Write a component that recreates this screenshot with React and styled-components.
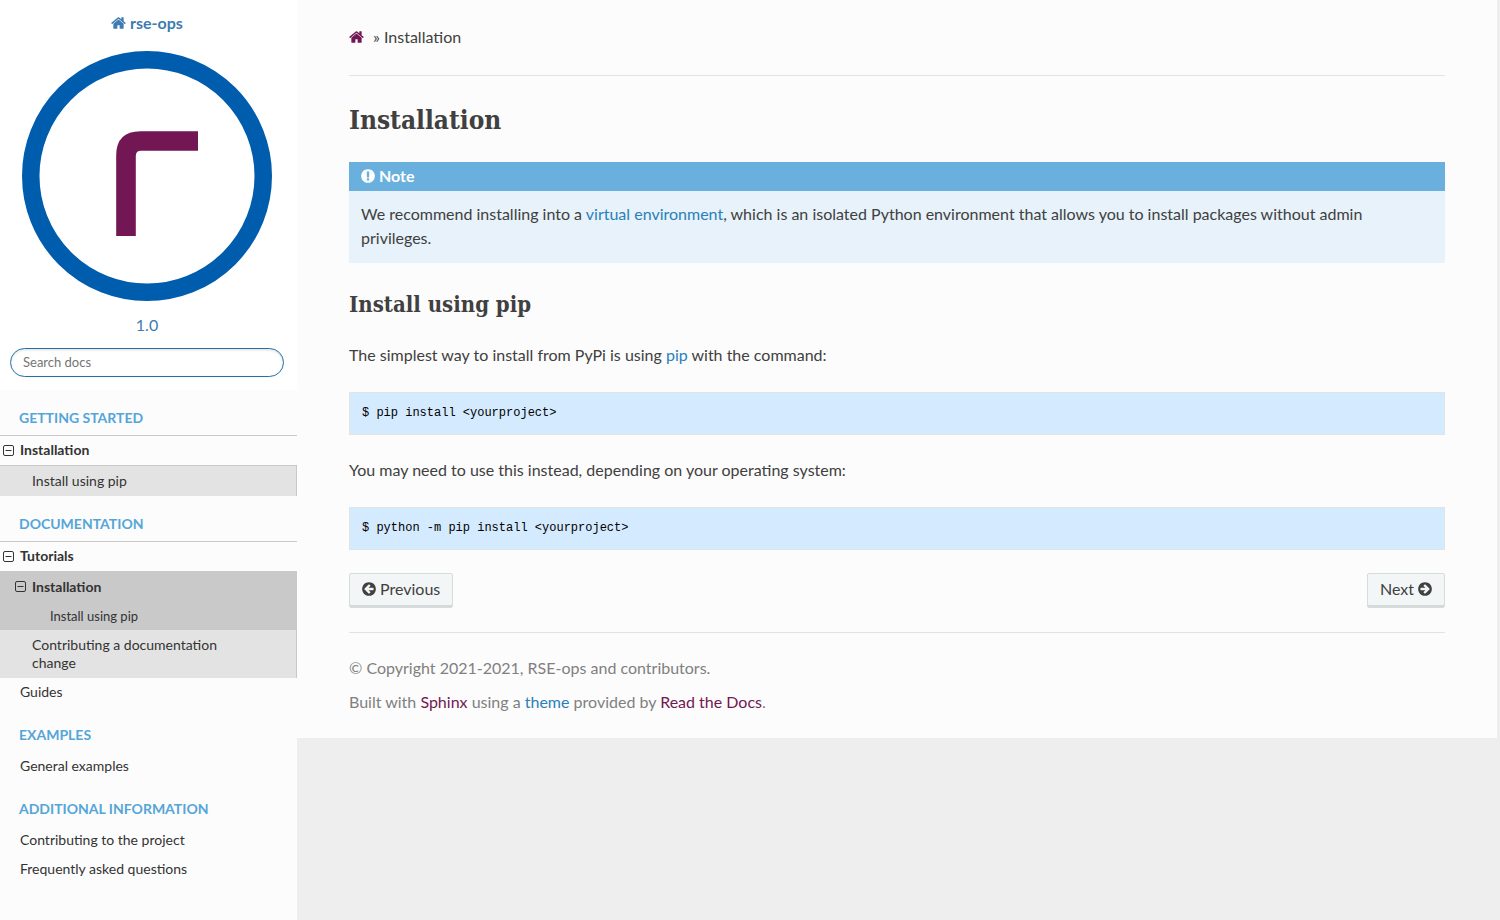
import React from "react";
import styled, { createGlobalStyle, css } from "styled-components";

const GlobalStyle = createGlobalStyle`
  *, *::before, *::after { box-sizing: border-box; }
  html { background: #eeeeee; }
  body {
    margin: 0;
    font-family: Lato, "Liberation Sans", sans-serif;
    font-size: 16px;
    line-height: 24px;
    color: #404040;
  }
  p, h1, h2, ul, figure, pre { margin: 0; padding: 0; }
  ul { list-style: none; }
  a { color: #2980b9; text-decoration: none; }
`;

const Page = styled.div`
  display: flex;
  min-height: 100vh;
  align-items: flex-start;
`;

const Sidebar = styled.nav`
  flex: 0 0 297px;
  align-self: stretch;
  min-height: 100vh;
  background: #fcfcfc;
`;

const SidebarHeader = styled.div`
  display: flex;
  flex-direction: column;
  align-items: center;
  padding: 11px 13px 13px 10px;
  background: #ffffff;
  color: #3d7bb0;
`;

const ProjectLink = styled.a`
  display: flex;
  flex-direction: column;
  align-items: center;
  gap: 16px;
  font-weight: 700;
  color: inherit;
`;

const ProjectLogo = styled.svg`
  display: block;
  width: 250px;
  height: 250px;
`;

const Version = styled.div`
  margin: 12px 0 11px;
`;

const SearchForm = styled.form`
  width: 100%;
`;

const SearchInput = styled.input`
  display: block;
  width: 100%;
  height: 29px;
  padding: 5px 12px 7px;
  border: 1px solid #2472a4;
  border-radius: 50px;
  background: #ffffff;
  box-shadow: inset 0 1px 3px #dddddd;
  font-family: inherit;
  font-size: 13px;
  color: #404040;
  outline: none;
  &::placeholder { color: #757575; }
`;

const Caption = styled.p`
  margin: 12px 0 1px;
  padding: 0 19px;
  font-size: 14px;
  font-weight: 700;
  line-height: 32px;
  color: #55a5d9;
  text-transform: uppercase;
`;

const levels = {
  1: css`padding: 5px 20px 6px; font-size: 14px;`,
  2: css`
    padding: 6px 52px 6px 32px;
    font-size: 14px;
    background: #e3e3e3;
    border-right: 1px solid #c9c9c9;
  `,
  3: css`
    padding: 5px 50px;
    font-size: 13px;
    background: #c9c9c9;
  `,
};

const TocLink = styled.a`
  display: block;
  position: relative;
  line-height: 18px;
  color: #333333;
  ${(p) => levels[p.$level]}
  ${(p) => p.$rule && css`border-top: 1px solid #c9c9c9;`}
  ${(p) => p.$current && css`font-weight: 700;`}
  ${(p) => p.$open && css`background: #c9c9c9; border-top: 1px solid #c9c9c9;`}
`;

const Toggle = styled.svg`
  position: absolute;
  left: ${(p) => (p.$level === 1 ? 3 : 15)}px;
  top: 9px;
  width: 11px;
  height: 11px;
`;

const Main = styled.main`
  flex: 1 1 0;
  min-width: 0;
  max-width: 1200px;
  padding: 25px 52px 24px;
  background: #fcfcfc;
`;

const Breadcrumbs = styled.ul`
  display: flex;
  align-items: center;
  gap: 9px;
  margin-bottom: 26px;
`;

const HomeLink = styled.a`
  display: flex;
  color: #721753;
`;

const Rule = styled.hr`
  margin: 0;
  border: 0;
  border-top: 1px solid #e1e4e5;
`;

const Title = styled.h1`
  margin: 25px 0 23px;
  font-family: "Roboto Slab", "DejaVu Serif Condensed", "DejaVu Serif", serif;
  font-size: 26px;
  line-height: 38px;
`;

const Subtitle = styled.h2`
  margin: 25px 0 22px;
  font-family: "Roboto Slab", "DejaVu Serif Condensed", "DejaVu Serif", serif;
  font-size: 22px;
  line-height: 33px;
`;

const Note = styled.aside`
  background: #e7f2fa;
`;

const NoteTitle = styled.p`
  display: flex;
  align-items: center;
  gap: 4px;
  padding: 5px 12px 7px;
  font-weight: 700;
  line-height: 17px;
  color: #ffffff;
  background: #6ab0de;
`;

const NoteText = styled.p`
  padding: 11px 12px 13px;
`;

const CodeBlock = styled.pre`
  margin: 25px 0 23px;
  padding: 12px;
  border: 1px solid #e1e4e5;
  background: #d4eaff;
  color: #000000;
  font-family: "Liberation Mono", monospace;
  font-size: 12px;
  line-height: 17px;
  overflow-x: auto;
`;

const Pager = styled.div`
  display: flex;
  justify-content: space-between;
  margin-bottom: 24px;
`;

const PagerLink = styled.a`
  display: flex;
  align-items: center;
  gap: 4px;
  padding: 4px 12px 7px;
  border: 1px solid #d8dcdc;
  border-radius: 2px;
  background: #f3f6f6;
  box-shadow: inset 0 -2px 0 #d5dadb;
  color: #404040;
  line-height: 22px;
`;

const Footer = styled.footer`
  display: flex;
  flex-direction: column;
  gap: 10px;
  padding-top: 23px;
  color: #808080;
`;

const VisitedLink = styled.a`
  color: #721753;
`;

const Icon = styled.svg`
  display: ${(p) => (p.$inline ? "inline-block" : "block")};
  width: ${(p) => p.$width}px;
  height: 16px;
  fill: currentColor;
  vertical-align: -2px;
`;

const HomeIcon = ({ inline }) => (
  <Icon $width={15} $inline={inline} viewBox="0 0 1664 1792" aria-hidden="true">
    <path d="M1408 992v480q0 26-19 45t-45 19h-384v-384h-256v384h-384q-26 0-45-19t-19-45v-480q0-1 .5-3t.5-3l575-474 575 474q1 2 1 6zm223-69l-62 74q-8 9-21 11h-3q-13 0-21-7l-692-577-692 577q-12 8-24 7-13-2-21-11l-62-74q-8-10-7-23.500t11-21.500l719-599q32-26 76-26t76 26l244 204v-195q0-14 9-23t23-9h192q14 0 23 9t9 23v408l219 182q10 8 11 21.500t-7 23.500z" />
  </Icon>
);

const AlertIcon = () => (
  <Icon $width={14} viewBox="0 0 1536 1792" aria-hidden="true">
    <path d="M768 128q209 0 385.500 103t279.500 279.500 103 385.500-103 385.500-279.500 279.500-385.500 103-385.500-103-279.500-279.500-103-385.500 103-385.500 279.500-279.500 385.500-103zm128 1247v-190q0-14-9-23.500t-22-9.500h-192q-13 0-23 10t-10 23v190q0 13 10 23t23 10h192q13 0 22-9.500t9-23.500zm-2-344l18-621q0-12-10-18-10-8-24-8h-220q-14 0-24 8-10 6-10 18l17 621q0 10 10 17.500t24 7.500h185q14 0 23.500-7.500t10.500-17.500z" />
  </Icon>
);

const ArrowIcon = ({ right }) => (
  <Icon $width={14} viewBox="0 0 1536 1792" aria-hidden="true">
    <path
      transform={right ? "translate(1536 0) scale(-1 1)" : undefined}
      d="M1280 960v-128q0-26-19-45t-45-19h-502l189-189q19-19 19-45t-19-45l-91-91q-18-18-45-18t-45 18l-362 362-91 91q-18 18-18 45t18 45l91 91 362 362q18 18 45 18t45-18l91-91q18-18 18-45t-18-45l-189-189h502q26 0 45-19t19-45zm256-64q0 209-103 385.500t-279.500 279.500-385.500 103-385.500-103-279.500-279.500-103-385.500 103-385.500 279.500-279.500 385.500-103 385.500 103 279.500 279.500 103 385.500z"
    />
  </Icon>
);

const TocItem = ({ level = 1, toggle, children, ...flags }) => (
  <li>
    <TocLink
      href="#"
      $level={level}
      $rule={flags.rule}
      $current={flags.current}
      $open={flags.open}
    >
      {toggle && (
        <Toggle $level={level} viewBox="0 0 11 11" aria-hidden="true">
          <rect x="0.5" y="0.5" width="10" height="10" rx="1.500" fill="none" stroke="#333" />
          <path d="M2.500 5.500h6" stroke="#333" />
        </Toggle>
      )}
      {children}
    </TocLink>
  </li>
);

export default function App() {
  return (
    <>
      <GlobalStyle />
      <Page>
        <Sidebar aria-label="Documentation">
          <SidebarHeader>
            <ProjectLink href="#">
              <span>
                <HomeIcon inline /> rse-ops
              </span>
              <ProjectLogo viewBox="0 0 250 250" role="img" aria-label="rse-ops logo">
                <circle cx="125" cy="125" r="116.250" fill="none" stroke="#005dad" strokeWidth="17.500" />
                <path
                  d="M94.200 185V104.500Q94.200 80.200 118.500 80.200H176V99.700H119Q113.800 99.700 113.800 105V185Z"
                  fill="#721753"
                />
              </ProjectLogo>
            </ProjectLink>
            <Version>1.0</Version>
            <SearchForm role="search">
              <SearchInput type="text" placeholder="Search docs" aria-label="Search docs" />
            </SearchForm>
          </SidebarHeader>

          <Caption>Getting Started</Caption>
          <ul>
            <TocItem rule current toggle>Installation</TocItem>
            <TocItem level={2} rule>Install using pip</TocItem>
          </ul>
          <Caption>Documentation</Caption>
          <ul>
            <TocItem rule current toggle>Tutorials</TocItem>
            <TocItem level={2} current open toggle>Installation</TocItem>
            <TocItem level={3}>Install using pip</TocItem>
            <TocItem level={2}>Contributing a documentation change</TocItem>
            <TocItem>Guides</TocItem>
          </ul>
          <Caption>Examples</Caption>
          <ul>
            <TocItem>General examples</TocItem>
          </ul>
          <Caption>Additional Information</Caption>
          <ul>
            <TocItem>Contributing to the project</TocItem>
            <TocItem>Frequently asked questions</TocItem>
          </ul>
        </Sidebar>

        <Main>
          <Breadcrumbs>
            <li>
              <HomeLink href="#" aria-label="Home">
                <HomeIcon />
              </HomeLink>
            </li>
            <li>» Installation</li>
          </Breadcrumbs>
          <Rule />

          <Title>Installation</Title>
          <Note>
            <NoteTitle>
              <AlertIcon />
              Note
            </NoteTitle>
            <NoteText>
              We recommend installing into a <a href="#">virtual environment</a>, which is an
              isolated Python environment that allows you to install packages without admin
              privileges.
            </NoteText>
          </Note>

          <Subtitle>Install using pip</Subtitle>
          <p>
            The simplest way to install from PyPi is using <a href="#">pip</a> with the command:
          </p>
          <CodeBlock>$ pip install &lt;yourproject&gt;</CodeBlock>
          <p>You may need to use this instead, depending on your operating system:</p>
          <CodeBlock>$ python -m pip install &lt;yourproject&gt;</CodeBlock>

          <Pager>
            <PagerLink href="#">
              <ArrowIcon />
              Previous
            </PagerLink>
            <PagerLink href="#">
              Next
              <ArrowIcon right />
            </PagerLink>
          </Pager>
          <Rule />
          <Footer>
            <p>© Copyright 2021-2021, RSE-ops and contributors.</p>
            <p>
              Built with <VisitedLink href="#">Sphinx</VisitedLink> using a{" "}
              <a href="#">theme</a> provided by <VisitedLink href="#">Read the Docs</VisitedLink>.
            </p>
          </Footer>
        </Main>
      </Page>
    </>
  );
}
